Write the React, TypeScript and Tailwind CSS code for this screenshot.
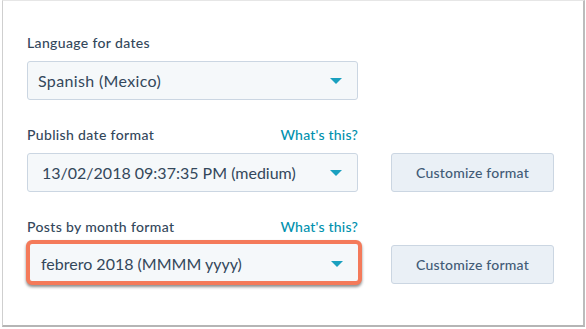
import React from "react";

const Arrow = () => (
  <svg width="12" height="6" viewBox="0 0 12 6" className="shrink-0">
    <path d="M0 0 L12 0 L6 6 Z" fill="#1aa0bf" />
  </svg>
);

const Label = ({ text, link }: { text: string; link?: boolean }) => (
  <div className="flex w-[331px] items-end justify-between h-[20px] text-[14px] leading-[20px]">
    <span className="text-[#33475b] font-medium tracking-[0.35px]">{text}</span>
    {link && <span className="text-[#0091ae] font-medium tracking-[0.2px]">What's this?</span>}
  </div>
);

const Button = () => (
  <div className="ml-[33px] flex h-[39px] w-[163px] items-center justify-center rounded-[3px] border border-[#cbd6e2] bg-[#eaf0f6] text-[14px] font-medium tracking-[0.2px] text-[#425b76]">
    Customize format
  </div>
);

export default function App() {
  return (
    <div
      className="h-[329px] w-[586px] bg-white"
      style={{ fontFamily: "Lato, 'Open Sans', sans-serif" }}
    >
      <div className="ml-[2px] h-[327px] w-[583px] border-l border-t border-l-[#cfcfcf] border-t-[#e6e6e6] border-r-2 border-b-2 border-r-[#bcbcbc] border-b-[#b5b5b5] pl-[24px] pt-[32px]">
        <Label text="Language for dates" />
        <div className="mt-[8px] flex h-[39px] w-[331px] items-center justify-between rounded-[3px] border border-[#cbd6e2] bg-[#f5f8fa] pl-[10px] pr-[15px] text-[16px] text-[#33475b]">
          <span className="tracking-[0.35px]">Spanish (Mexico)</span>
          <Arrow />
        </div>

        <div className="mt-[25px]">
          <Label text="Publish date format" link />
        </div>
        <div className="mt-[8px] flex">
          <div className="flex h-[39px] w-[331px] items-center justify-between rounded-[3px] border border-[#cbd6e2] bg-[#f5f8fa] pl-[14px] pr-[15px] text-[16px] text-[#33475b]">
            <span>13/02/2018 09:37:35 PM (medium)</span>
            <Arrow />
          </div>
          <Button />
        </div>

        <div className="mt-[25px]">
          <Label text="Posts by month format" link />
        </div>
        <div className="mt-[8px] flex">
          <div className="-mb-[1px] -ml-[1px] -mr-[4px] -mt-[5px] flex h-[45px] w-[336px] items-center justify-between rounded-[6px] border-4 border-[#f47a5a] bg-[#f5f8fa] pl-[11px] pr-[15px] pt-[3px] text-[16px] text-[#33475b] shadow-[0_2px_3px_rgba(0,0,0,0.45)]">
            <span>febrero 2018 (MMMM yyyy)</span>
            <Arrow />
          </div>
          <Button />
        </div>
      </div>
    </div>
  );
}
